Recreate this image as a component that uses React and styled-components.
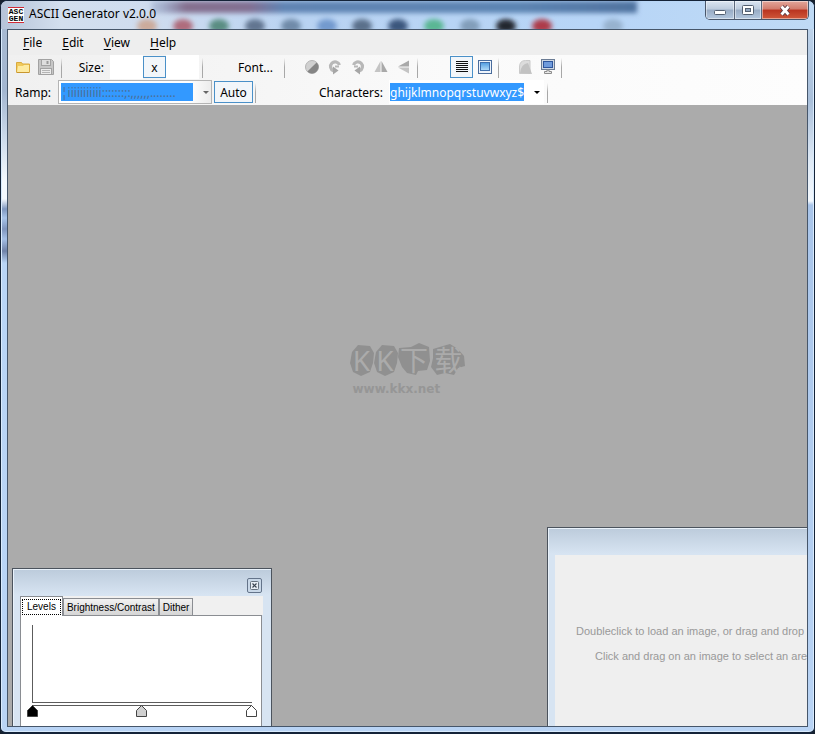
import React, { useState } from 'react'
import styled, { createGlobalStyle } from 'styled-components'

const uiFont = `"Noto Sans", "Open Sans", sans-serif`
const dialogFont = `"Liberation Sans", Arial, sans-serif`

const App = () => {
    const [tab, setTab] = useState('Levels')
    const [chars, setChars] = useState('ghijklmnopqrstuvwxyz$')

    return (
        <>
            <GlobalStyle />
            <Frame>
                <TitleBar>
                    <Reflection />
                    <AppIcon />
                    <Title>ASCII Generator v2.0.0</Title>
                    <CaptionButtons />
                </TitleBar>
                <Client>
                    <MenuBar>
                        {['File', 'Edit', 'View', 'Help'].map((name) => (
                            <MenuItem key={name}><u>{name[0]}</u>{name.slice(1)}</MenuItem>
                        ))}
                    </MenuBar>
                    <Dock>
                        <Strip $width={54} $pad={3}>
                            <Tool aria-label="Open"><FolderIcon /></Tool>
                            <Tool aria-label="Save"><SaveIcon /></Tool>
                        </Strip>
                        <Strip $width={141} $end $pad={3}>
                            <SizeLabel htmlFor="size-width">Size:</SizeLabel>
                            <SizeBox id="size-width" />
                            <Tool $active aria-label="Lock ratio">x</Tool>
                            <SizeBox aria-label="Height" />
                        </Strip>
                        <Strip $width={82} $end $pad={8}>
                            <TextButton>Font...</TextButton>
                        </Strip>
                        <Strip $width={133} $end>
                            <Tool aria-label="Invert"><InvertIcon /></Tool>
                            <Tool aria-label="Rotate left"><RotateIcon flip /></Tool>
                            <Tool aria-label="Rotate right"><RotateIcon /></Tool>
                            <Tool aria-label="Flip horizontally"><MirrorIcon /></Tool>
                            <Tool aria-label="Flip vertically"><MirrorIcon turned /></Tool>
                        </Strip>
                        <Strip $width={81} $end>
                            <Tool $active aria-label="Text view"><LinesIcon /></Tool>
                            <Tool aria-label="Image view"><PictureIcon /></Tool>
                        </Strip>
                        <Strip $width={63} $end>
                            <Tool aria-label="Colour preview"><PageIcon /></Tool>
                            <Tool aria-label="Full screen"><MonitorIcon /></Tool>
                        </Strip>
                    </Dock>
                    <Dock>
                        <Strip $width={248}>
                            <RampLabel htmlFor="ramp">Ramp:</RampLabel>
                            <Combo>
                                <RampSelect id="ramp">
                                    <option>¦iiiiiiiiiii:::::::;:,,,,,,........</option>
                                </RampSelect>
                                <Arrow color="#666" />
                            </Combo>
                            <AutoButton>Auto</AutoButton>
                        </Strip>
                        <Strip $width={292} $end $pad={3}>
                            <CharsLabel htmlFor="characters">Characters:</CharsLabel>
                            <CharsBox>
                                <CharsInput
                                    id="characters"
                                    value={chars}
                                    onChange={(e) => setChars(e.target.value)}
                                />
                                <DropButton aria-label="Character sets"><Arrow color="#000" /></DropButton>
                            </CharsBox>
                        </Strip>
                    </Dock>
                    <Workspace>
                        <Watermark />
                        <LevelsWindow>
                            <ChildCaption>
                                <ChildClose aria-label="Close">
                                    <svg width="9" height="9" viewBox="0 0 9 9">
                                        <rect x="0.5" y="0.5" width="8" height="8" rx="1" fill="#e8eef5" stroke="#66727f" />
                                        <path d="M2.5 2.5l4 4M6.5 2.5l-4 4" stroke="#39434f" strokeWidth="1.2" />
                                    </svg>
                                </ChildClose>
                            </ChildCaption>
                            <Tabs role="tablist">
                                {['Levels', 'Brightness/Contrast', 'Dither'].map((name) => (
                                    <Tab
                                        key={name}
                                        role="tab"
                                        aria-selected={tab === name}
                                        $active={tab === name}
                                        onClick={() => setTab(name)}
                                    >
                                        <span>{name}</span>
                                    </Tab>
                                ))}
                            </Tabs>
                            <TabPage>
                                <Histogram />
                            </TabPage>
                        </LevelsWindow>
                        <ImageWindow>
                            <ImageArea>
                                <p>Doubleclick to load an image, or drag and drop</p>
                                <p>Click and drag on an image to select an area</p>
                            </ImageArea>
                        </ImageWindow>
                    </Workspace>
                </Client>
            </Frame>
        </>
    )
}

const blobs = [
    [146, '#c98a62', 0.6], [182, '#a8505e', 0.8], [218, '#3f7a66', 0.8], [254, '#4a5c78', 0.8],
    [290, '#5d7896', 0.8], [326, '#5580bd', 0.7], [361, '#41566f', 0.8], [397, '#2f4870', 0.9],
    [433, '#4fb488', 0.9], [469, '#6b86a0', 0.7], [505, '#20262e', 1], [541, '#ad3a48', 1],
    [612, '#8fa9c4', 0.8],
]

// blurred desktop that shows through the glass title bar
const Reflection = () => (
    <Glass width="815" height="28" viewBox="0 0 815 28" aria-hidden="true">
        <defs>
            <filter id="soft" x="-20%" y="-50%" width="140%" height="200%">
                <feGaussianBlur stdDeviation="2.5" />
            </filter>
            <linearGradient id="band" gradientUnits="userSpaceOnUse" x1="150" y1="0" x2="640" y2="0">
                <stop offset="0" stopColor="#7f93ba" stopOpacity="0.3" />
                <stop offset="0.07" stopColor="#84708f" />
                <stop offset="0.2" stopColor="#826f92" />
                <stop offset="0.27" stopColor="#6084b3" />
                <stop offset="0.75" stopColor="#5c84b2" />
                <stop offset="1" stopColor="#4f719e" />
            </linearGradient>
        </defs>
        <g filter="url(#soft)">
            <rect x="150" y="0" width="486" height="12" fill="url(#band)" />
            {blobs.map(([x, color, opacity]) => (
                <ellipse key={x} cx={x} cy="25" rx="10" ry="7" fill={color} opacity={opacity} />
            ))}
        </g>
    </Glass>
)

const AppIcon = () => (
    <LogoTile>
        <svg width="16" height="16" viewBox="0 0 16 16" shapeRendering="crispEdges" fill="none">
            <rect width="16" height="16" fill="#fff" />
            <path d="M0 0.5h16M0 15.5h16" stroke="#d22a36" />
        </svg>
        <LogoText><span>ASC</span><span>GEN</span></LogoText>
    </LogoTile>
)

const CaptionButtons = () => (
    <Caption>
        <CaptionButton $width={28} aria-label="Minimize">
            <svg width="12" height="11" viewBox="0 0 12 11">
                <rect x="0.5" y="5.500" width="11" height="4" rx="1" fill="#fff" stroke="#535f70" />
            </svg>
        </CaptionButton>
        <CaptionButton $width={27} aria-label="Maximize">
            <svg width="12" height="11" viewBox="0 0 12 11">
                <rect x="0.5" y="0.5" width="11" height="9" rx="1" fill="#fff" stroke="#535f70" />
                <rect x="3.5" y="3.5" width="5" height="3" fill="#93a7c0" stroke="#535f70" />
            </svg>
        </CaptionButton>
        <CaptionButton $width={47} $danger aria-label="Close">
            <svg width="12" height="11" viewBox="0 0 12 11">
                <path d="M2.500 1.500l7 8M9.500 1.500l-7 8" stroke="#5c3d45" strokeWidth="4.6" />
                <path d="M2.500 1.500l7 8M9.500 1.500l-7 8" stroke="#fff" strokeWidth="2.8" />
            </svg>
        </CaptionButton>
    </Caption>
)

const FolderIcon = () => (
    <svg width="16" height="16" viewBox="0 0 16 16">
        <path d="M1.5 13V3.5h5l1 1.5h7v8z" fill="#f0c95a" stroke="#d9a93c" />
        <path d="M2 13l1-6h5l1-1h5v7z" fill="#fdeaa0" />
        <path d="M1.5 13.5h13" stroke="#c8962e" />
    </svg>
)

const SaveIcon = () => (
    <svg width="18" height="18" viewBox="0 0 18 18">
        <path d="M1.5 1.5h13l2 2v13h-15z" fill="#c6c6c6" stroke="#a2a2a2" />
        <rect x="4.5" y="1.5" width="9" height="6" fill="#dedede" stroke="#a2a2a2" />
        <path d="M10.5 3v3" stroke="#999" strokeWidth="2" />
        <rect x="3.5" y="10.5" width="11" height="6" fill="#ececec" stroke="#a2a2a2" />
        <path d="M5 12.5h8M5 14.5h8" stroke="#b5b5b5" />
    </svg>
)

const InvertIcon = () => (
    <svg width="16" height="16" viewBox="0 0 16 16">
        <circle cx="8" cy="8" r="6.5" fill="#d0d0d0" stroke="#b4b4b4" />
        <path d="M12.6 3.4A6.5 6.5 0 0 1 3.4 12.6z" fill="#858585" />
    </svg>
)

const RotateIcon = ({ flip }) => (
    <svg width="16" height="16" viewBox="0 0 16 16">
        <g transform={flip ? 'translate(16 0) scale(-1 1)' : undefined}>
            <path d="M3.500 6a4.600 4.600 0 1 1 6 5.800" fill="none" stroke="#b8b8b8" strokeWidth="3.200" />
            <path d="M10 7.500v8L4.500 11.500z" fill="#a6a6a6" />
            <path d="M4 7.500h4" stroke="#b8b8b8" strokeWidth="2" />
        </g>
    </svg>
)

const MirrorIcon = ({ turned }) => (
    <svg width="16" height="16" viewBox="0 0 16 16">
        <g transform={turned ? 'rotate(-90 8 8)' : undefined}>
            <path d="M7.500 2v11H1.500z" fill="#c4c4c4" />
            <path d="M8.500 2v11h6z" fill="#a9a9a9" />
        </g>
    </svg>
)

const LinesIcon = () => (
    <svg width="14" height="12" viewBox="0 0 14 12" shapeRendering="crispEdges">
        <path d="M1 0.500h12M1 2.500h12M1 4.500h12M1 6.500h12M1 8.500h12M1 10.500h12" stroke="#111" />
    </svg>
)

const PictureIcon = () => (
    <svg width="16" height="16" viewBox="0 0 16 16">
        <defs>
            <linearGradient id="sky" x1="0" y1="0" x2="0" y2="1">
                <stop offset="0" stopColor="#4f9ce0" />
                <stop offset="1" stopColor="#b4dcf8" />
            </linearGradient>
        </defs>
        <rect x="1.500" y="1.500" width="13" height="13" fill="#eef4fb" stroke="#4a6c9c" />
        <rect x="3.500" y="3.500" width="9" height="8" fill="url(#sky)" stroke="#3f6fac" />
    </svg>
)

const PageIcon = () => (
    <svg width="16" height="16" viewBox="0 0 16 16">
        <path d="M2.500 14.500V8q0-6.500 6-6.500H13v13z" fill="#dcdcdc" stroke="#cacaca" />
        <path d="M3 14q1-9 8-10l4 11z" fill="#c2c2c2" />
    </svg>
)

const MonitorIcon = () => (
    <svg width="16" height="16" viewBox="0 0 16 16">
        <rect x="1.500" y="0.500" width="13" height="10" fill="#cfd8e4" stroke="#6b7c94" />
        <rect x="3.500" y="2.500" width="9" height="6" fill="#6f9bdc" stroke="#2d559c" />
        <path d="M7 11h2v1.500h2.500v2h-7v-2H7z" fill="#e8e8e8" stroke="#8c8c8c" />
    </svg>
)

const Arrow = ({ color }) => (
    <svg width="6" height="3" viewBox="0 0 6 3" aria-hidden="true">
        <path d="M0 0h6L3 3z" fill={color} />
    </svg>
)

const Histogram = () => (
    <svg width="240" height="110" viewBox="0 0 240 110" shapeRendering="crispEdges">
        <path d="M11.500 9v78M11 86.500h220M11 89.500h220" stroke="#5c5c5c" fill="none" />
        {[[11, '#000'], [120, '#d0d0d0'], [230, '#fff']].map(([x, fill]) => (
            <path
                key={x}
                d={`M${x + 0.5} 89.500l5 5v6h-10v-6z`}
                fill={fill}
                stroke="#444"
                shapeRendering="auto"
            />
        ))}
    </svg>
)

const Watermark = () => (
    <Mark>
        <MarkTop>
            <svg width="116" height="34" viewBox="0 0 116 34" fill="#909090" aria-hidden="true">
                <path d="M2 9L8 2l12 1 4 7-1 10-3 9-9 4-8-4-3-9z" />
                <path d="M26 9l6-7 12 1 4 7-1 10-3 9-9 4-8-4-3-9z" />
                <path d="M49 5l12-1 8-4 10 4 1 14-3 9-9 1-2 4-9-2-5-6-4-10z" />
                <path d="M83 6l10-3 7-2 8 5 6 7 1 10-7 2-4 7-9-2-8 2-6-8 2-9z" />
            </svg>
            <MarkName><span>K</span><span>K</span><span>下</span><span>载</span></MarkName>
        </MarkTop>
        <MarkUrl>www.kkx.net</MarkUrl>
    </Mark>
)

const GlobalStyle = createGlobalStyle`
    * {
        box-sizing: border-box;
    }
    body {
        margin: 0;
        background: #16202e;
        font-family: ${uiFont};
        font-size: 12px;
        color: #000;
    }
    button, input, select {
        font: inherit;
        color: inherit;
        margin: 0;
        padding: 0;
        border: 0;
        border-radius: 0;
        background: none;
    }
    svg {
        display: block;
        flex: none;
    }
`

const Frame = styled.div`
    display: flex;
    flex-direction: column;
    height: 100vh;
    overflow: hidden;
    padding: 0 6px 5px;
    border: 1px solid #142338;
    border-bottom-width: 2px;
    border-radius: 7px 7px 6px 6px;
    background:
        linear-gradient(#a9bbd2 0, #a3b6d0 90px, #cfdded 140px, #f4f9fe 180px, #f4f9fe 198px, #7f97bf 208px, #a9c5ea 217px, #7f95bd 228px, #a5c0e6 238px, #6f82a8 250px, #b9d5f6 262px, #b9d4f5 100%) left / 7px 100% no-repeat,
        linear-gradient(#c5daf0 0, #a9bfda 100px, #dfeaf6 160px, #f4f9fe 200px, #a9c5ea 204px, #b9d4f5 100%) right / 7px 100% no-repeat,
        #b9d4f5;
    box-shadow: inset 0 0 0 1px #d9ebfd;
`

const TitleBar = styled.header`
    position: relative;
    flex: none;
    display: flex;
    align-items: center;
    height: 28px;
    margin: 0 -6px;
    padding-left: 7px;
    background: linear-gradient(90deg, #b6c3d8 0, #d3dfee 60px, #cfdcef 150px, #b9d3f2 300px, #b7d5f7 600px, #bfdaf5 100%);
`

const Glass = styled.svg`
    position: absolute;
    left: 0;
    top: 0;
`

const LogoTile = styled.div`
    position: relative;
    width: 16px;
    height: 16px;
`

const LogoText = styled.div`
    position: absolute;
    inset: 1px 0;
    display: flex;
    flex-direction: column;
    align-items: center;
    font: bold 8px/7px "Liberation Mono", monospace;
`

const Title = styled.h1`
    position: relative;
    flex: 1;
    margin: 0 0 0 5px;
    font-size: 12px;
    line-height: 18px;
    padding-bottom: 2px;
    font-weight: 400;
`

const Caption = styled.div`
    position: relative;
    align-self: flex-start;
    display: flex;
    margin-right: 5px;
    border: 1px solid #49566a;
    border-top: 0;
    border-radius: 0 0 5px 5px;
    overflow: hidden;
`

const CaptionButton = styled.button`
    display: flex;
    align-items: center;
    justify-content: center;
    width: ${({ $width }) => $width}px;
    height: 18px;
    background: ${({ $danger }) => $danger
        ? 'linear-gradient(#e3a79b 0, #d27b6c 45%, #b93420 50%, #d0583a 100%)'
        : 'linear-gradient(#dbe5f1 0, #bccbdd 45%, #98abc4 50%, #b4c8df 100%)'};
    box-shadow: inset 0 0 0 1px rgba(255, 255, 255, 0.45);
    & + & {
        border-left: 1px solid #5b687c;
    }
`

const Client = styled.main`
    flex: 1;
    min-height: 0;
    display: flex;
    flex-direction: column;
    border: 1px solid #46566a;
    background: #ababab;
    overflow: hidden;
`

const MenuBar = styled.nav`
    flex: none;
    display: flex;
    align-items: center;
    gap: 20px;
    height: 25px;
    padding-left: 15px;
    background: #eee;
`

const MenuItem = styled.button`
    line-height: 20px;
    u {
        text-underline-offset: 2px;
    }
`

const Dock = styled.div`
    flex: none;
    display: flex;
    height: 25px;
    padding-bottom: 1px;
    background: linear-gradient(90deg, #f0f0f0, #fafafa 55%, #fdfdfd);
`

const Strip = styled.div`
    display: flex;
    align-items: center;
    justify-content: ${({ $end }) => ($end ? 'flex-end' : 'flex-start')};
    width: ${({ $width }) => $width}px;
    padding: ${({ $end, $pad = 2 }) => ($end ? `0 ${$pad}px 0 0` : `0 0 0 ${$pad}px`)};
    border-right: 1px solid #b9b9b9;
    border-image: linear-gradient(transparent 15%, #a8a8a8 50%, #a8a8a8 92%, transparent 92%) 1;
`

const Tool = styled.button`
    display: flex;
    align-items: center;
    justify-content: center;
    width: 23px;
    height: 22px;
    border: 1px solid ${({ $active }) => ($active ? '#4a90c8' : 'transparent')};
    background: ${({ $active }) => ($active ? '#f2f6fa' : 'none')};
`

const TextButton = styled.button`
    padding: 0 3px;
`

const SizeLabel = styled.label`
    margin-right: 6px;
`

const SizeBox = styled.input`
    width: 33px;
    height: 24px;
    background: #fff;
`

const RampLabel = styled.label`
    width: 48px;
    padding-left: 5px;
`

const Combo = styled.div`
    display: flex;
    align-items: center;
    width: 154px;
    height: 24px;
    border: 1px solid #b4b4b4;
    background: linear-gradient(90deg, #fff 130px, #ececec);
`

const RampSelect = styled.select`
    appearance: none;
    width: 145px;
    height: 22px;
    margin-right: -1px;
    padding: 2px 11px 2px 2px;
    background: #3399ff content-box;
    color: #4d6f96;
`

const AutoButton = styled.button`
    width: 39px;
    height: 22px;
    margin-left: 2px;
    border: 1px solid #4a90c8;
    background: #f2f6fa;
`

const CharsLabel = styled.label`
    margin-right: 6px;
`

const CharsBox = styled.div`
    display: flex;
    align-items: center;
    height: 24px;
    padding-left: 1px;
    background: #fff;
`

const CharsInput = styled.input`
    width: 134px;
    height: 18px;
    background: #3399ff;
    color: #fff;
`

const DropButton = styled.button`
    display: flex;
    align-items: center;
    justify-content: center;
    width: 20px;
    height: 22px;
    padding-left: 6px;
`

const Workspace = styled.section`
    position: relative;
    flex: 1;
    min-height: 0;
    display: flex;
    align-items: center;
    justify-content: center;
    padding-bottom: 92px;
    overflow: hidden;
`

const Mark = styled.div`
    display: flex;
    flex-direction: column;
    width: 116px;
    color: #909090;
`

const MarkTop = styled.div`
    position: relative;
`

const MarkName = styled.div`
    position: absolute;
    inset: 0;
    display: flex;
    align-items: center;
    justify-content: space-around;
    color: #ababab;
    font: 28px/32px "Noto Sans", "Noto Sans CJK SC", sans-serif;
`

const MarkUrl = styled.span`
    padding: 5px 0 0 3px;
    font: bold 12px/14px "DejaVu Sans", sans-serif;
    color: #969696;
`

const ChildWindow = styled.div`
    position: absolute;
    display: flex;
    flex-direction: column;
    border: 1px solid #4b535d;
    border-bottom: 0;
    background: linear-gradient(#bccbdb 0, #d7e4f2 26px, #d7e4f2 100%);
    box-shadow: inset 1px 1px 0 #e9f2fb;
    font-family: ${dialogFont};
`

const LevelsWindow = styled(ChildWindow)`
    left: 4px;
    bottom: 0;
    width: 260px;
    height: 158px;
    padding: 0 8px 0 7px;
`

const ChildCaption = styled.div`
    flex: none;
    display: flex;
    justify-content: flex-end;
    height: 27px;
    padding: 9px 1px 0 0;
`

const ChildClose = styled.button`
    display: flex;
    align-items: center;
    justify-content: center;
    width: 15px;
    height: 15px;
    border: 1px solid #64748a;
    border-radius: 2px;
    background: #c9d8e8;
`

const Tabs = styled.div`
    flex: none;
    display: flex;
    align-items: flex-end;
    height: 19px;
    background: #f0f0f0;
`

const Tab = styled.button`
    position: relative;
    height: ${({ $active }) => ($active ? 20 : 17)}px;
    margin-bottom: ${({ $active }) => ($active ? -1 : 0)}px;
    padding: ${({ $active }) => ($active ? '0 2px' : '2px 3px 0')};
    border: 1px solid #8a8d92;
    border-bottom: 0;
    background: ${({ $active }) => ($active ? '#fff' : 'linear-gradient(#f2f2f2, #d5d5d5)')};
    font-size: 10px;
    line-height: 14px;
    z-index: ${({ $active }) => ($active ? 1 : 0)};
    & + & {
        margin-left: -1px;
        border-left-width: 2px;
    }
    span {
        display: block;
        padding: ${({ $active }) => ($active ? '0 4px' : '0')};
        outline: ${({ $active }) => ($active ? '1px dotted #000' : 'none')};
    }
`

const TabPage = styled.div`
    flex: 1;
    min-height: 0;
    border: 1px solid #8a8d92;
    border-bottom: 0;
    margin-right: 1px;
    background: #fff;
    overflow: hidden;
`

const ImageWindow = styled(ChildWindow)`
    left: 539px;
    right: 0;
    bottom: 0;
    height: 199px;
    padding: 27px 0 0 7px;
    border-right: 0;
`

const ImageArea = styled.div`
    flex: 1;
    padding: 64px 0 0 21px;
    overflow: hidden;
    background: #efefef;
    color: #999;
    font-size: 11px;
    line-height: 25px;
    white-space: nowrap;
    p {
        margin: 0;
    }
    p + p {
        padding-left: 19px;
    }
`

export default App
